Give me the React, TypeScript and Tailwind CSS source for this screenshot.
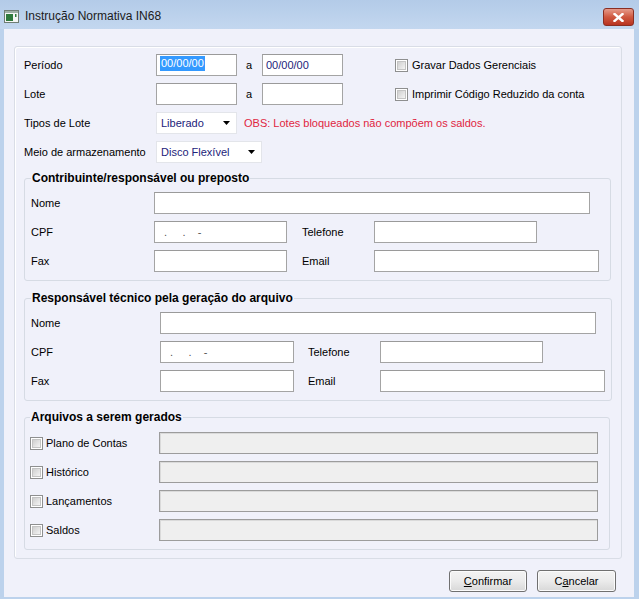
import React from "react";

function Box({
  className = "",
  color = "text-[#22227a]",
  children,
}: {
  className?: string;
  color?: string;
  children?: React.ReactNode;
}) {
  return (
    <div
      className={`h-[22px] shrink-0 bg-white border border-[#a4a4a4] border-t-[#9a9a9a] flex items-center px-[3px] text-[11px] whitespace-pre ${color} ${className}`}
    >
      {children}
    </div>
  );
}

function DisabledBox() {
  return (
    <div className="h-[22px] w-[439px] shrink-0 bg-[#efefef] border border-[#9c9c9c] shadow-[inset_1px_1px_0_#dadada]" />
  );
}

function Check() {
  return (
    <div className="w-[13px] h-[13px] shrink-0 border border-[#8e8f8f] bg-white p-[1px]">
      <div className="w-full h-full bg-gradient-to-br from-[#cfcfcf] to-[#f4f4f4] border border-[#c4c4c4]" />
    </div>
  );
}

function Select({ className = "", value }: { className?: string; value: string }) {
  return (
    <div
      className={`h-[22px] shrink-0 bg-white border border-[#e3e5ea] flex items-center justify-between pl-[4px] pr-[6px] text-[11px] text-[#22227a] ${className}`}
    >
      <span>{value}</span>
      <svg width="7" height="4" viewBox="0 0 7 4">
        <polygon points="0,0 7,0 3.5,4" fill="#000" />
      </svg>
    </div>
  );
}

function Legend({ children }: { children: React.ReactNode }) {
  return <legend className="px-[1px] text-[12px] font-bold leading-[15px] text-black">{children}</legend>;
}

export default function App() {
  return (
    <div className="w-[639px] h-[599px] flex flex-col bg-[#bcd2ec] font-['Liberation_Sans',Arial,sans-serif] text-[11px] text-black overflow-hidden">
      {/* Title bar */}
      <div className="h-[29px] shrink-0 flex items-center bg-gradient-to-b from-[#b3cbe8] to-[#c3d7ef] pl-[4px] pr-[5px]">
        <svg width="15" height="13" viewBox="0 0 15 13" className="mt-[4px]">
          <rect x="0.5" y="0.5" width="14" height="12" fill="#f4f6f4" stroke="#6f7d74" />
          <rect x="1" y="1" width="13" height="2" fill="#9fb0a6" />
          <rect x="2" y="4" width="7" height="7" fill="#2f7a3c" />
          <rect x="11" y="4" width="1.5" height="3" fill="#2f7a3c" />
        </svg>
        <span className="ml-[6px] mt-[3px] text-[12px] text-[#1b1b1b]">Instrução Normativa IN68</span>
        <div className="ml-auto mt-[5px] w-[31px] h-[18px] rounded-[3px] border border-[#8a2e22] bg-gradient-to-b from-[#e59a8a] via-[#cf5840] to-[#b8321f] flex items-center justify-center">
          <svg width="11" height="9" viewBox="0 0 11 9">
            <path d="M1.5 1 L9.5 8 M9.5 1 L1.5 8" stroke="#ffffff" strokeWidth="2.4" strokeLinecap="square" />
          </svg>
        </div>
      </div>

      {/* Client area */}
      <div className="ml-[4px] mr-[5px] mb-[2px] flex-1 bg-[#f0f1fa] flex flex-col pt-[17px]">
        <div className="ml-[10px] w-[608px] border border-[#d9dde6] rounded-[3px] shadow-[inset_1px_1px_0_#ffffff] pl-[9px] pt-[7px] pb-[8px]">
          {/* Top rows */}
          <div className="flex flex-col gap-[7px]">
            <div className="flex items-center h-[22px]">
              <span className="w-[132px] shrink-0">Período</span>
              <Box className="w-[81px] px-[1px] items-start pt-[1px]">
                <span className="bg-[#3399ff] text-white leading-[15px] px-[1px]">00/00/00</span>
              </Box>
              <span className="w-[25px] shrink-0 pl-[9px]">a</span>
              <Box className="w-[81px]">00/00/00</Box>
              <div className="ml-[52px] flex items-center gap-[4px]">
                <Check />
                <span>Gravar Dados Gerenciais</span>
              </div>
            </div>
            <div className="flex items-center h-[22px]">
              <span className="w-[132px] shrink-0">Lote</span>
              <Box className="w-[81px]" />
              <span className="w-[25px] shrink-0 pl-[9px]">a</span>
              <Box className="w-[81px]" />
              <div className="ml-[52px] flex items-center gap-[4px]">
                <Check />
                <span>Imprimir Código Reduzido da conta</span>
              </div>
            </div>
            <div className="flex items-center h-[22px]">
              <span className="w-[132px] shrink-0">Tipos de Lote</span>
              <Select className="w-[81px]" value="Liberado" />
              <span className="ml-[7px] text-[#e0253f]">OBS: Lotes bloqueados não compõem os saldos.</span>
            </div>
            <div className="flex items-center h-[22px]">
              <span className="w-[132px] shrink-0">Meio de armazenamento</span>
              <Select className="w-[106px]" value="Disco Flexível" />
            </div>
          </div>

          {/* Group 1 */}
          <fieldset className="mt-[8px] w-[587px] border border-[#d6dbe4] rounded-[3px] px-[6px] pt-[6px] pb-[8px]">
            <Legend>Contribuinte/responsável ou preposto</Legend>
            <div className="flex flex-col gap-[7px]">
              <div className="flex items-center">
                <span className="w-[123px] shrink-0">Nome</span>
                <Box className="w-[436px]" />
              </div>
              <div className="flex items-center">
                <span className="w-[123px] shrink-0">CPF</span>
                <Box className="w-[133px]" color="text-[#555555]">{"  .     .    -"}</Box>
                <span className="ml-[15px] w-[72px] shrink-0">Telefone</span>
                <Box className="w-[163px]" />
              </div>
              <div className="flex items-center">
                <span className="w-[123px] shrink-0">Fax</span>
                <Box className="w-[133px]" />
                <span className="ml-[15px] w-[72px] shrink-0">Email</span>
                <Box className="w-[225px]" />
              </div>
            </div>
          </fieldset>

          {/* Group 2 */}
          <fieldset className="mt-[10px] w-[586px] border border-[#d6dbe4] rounded-[3px] px-[6px] pt-[6px] pb-[8px]">
            <Legend>Responsável técnico pela geração do arquivo</Legend>
            <div className="flex flex-col gap-[7px]">
              <div className="flex items-center">
                <span className="w-[129px] shrink-0">Nome</span>
                <Box className="w-[436px]" />
              </div>
              <div className="flex items-center">
                <span className="w-[129px] shrink-0">CPF</span>
                <Box className="w-[134px]" color="text-[#555555]">{"  .     .    -"}</Box>
                <span className="ml-[14px] w-[72px] shrink-0">Telefone</span>
                <Box className="w-[163px]" />
              </div>
              <div className="flex items-center">
                <span className="w-[129px] shrink-0">Fax</span>
                <Box className="w-[134px]" />
                <span className="ml-[14px] w-[72px] shrink-0">Email</span>
                <Box className="w-[225px]" />
              </div>
            </div>
          </fieldset>

          {/* Group 3 */}
          <fieldset className="mt-[9px] w-[586px] border border-[#d6dbe4] rounded-[3px] pl-[5px] pr-[6px] pt-[7px] pb-[8px]">
            <Legend>Arquivos a serem gerados</Legend>
            <div className="flex flex-col gap-[7px]">
              {["Plano de Contas", "Histórico", "Lançamentos", "Saldos"].map((t) => (
                <div key={t} className="flex items-center">
                  <div className="w-[129px] shrink-0 flex items-center gap-[3px]">
                    <Check />
                    <span>{t}</span>
                  </div>
                  <DisabledBox />
                </div>
              ))}
            </div>
          </fieldset>
        </div>

        {/* Buttons */}
        <div className="mt-[11px] flex justify-end gap-[10px] pr-[18px]">
          <button className="w-[78px] h-[22px] rounded-[3px] border border-[#707070] bg-gradient-to-b from-[#f3f3f3] via-[#ebebeb] to-[#d8d8d8] text-[11px] text-black shadow-[inset_0_0_0_1px_#fbfbfb]">
            <span className="underline">C</span>onfirmar
          </button>
          <button className="w-[79px] h-[22px] rounded-[3px] border border-[#707070] bg-gradient-to-b from-[#f3f3f3] via-[#ebebeb] to-[#d8d8d8] text-[11px] text-black shadow-[inset_0_0_0_1px_#fbfbfb]">
            C<span className="underline">a</span>ncelar
          </button>
        </div>
      </div>
    </div>
  );
}
